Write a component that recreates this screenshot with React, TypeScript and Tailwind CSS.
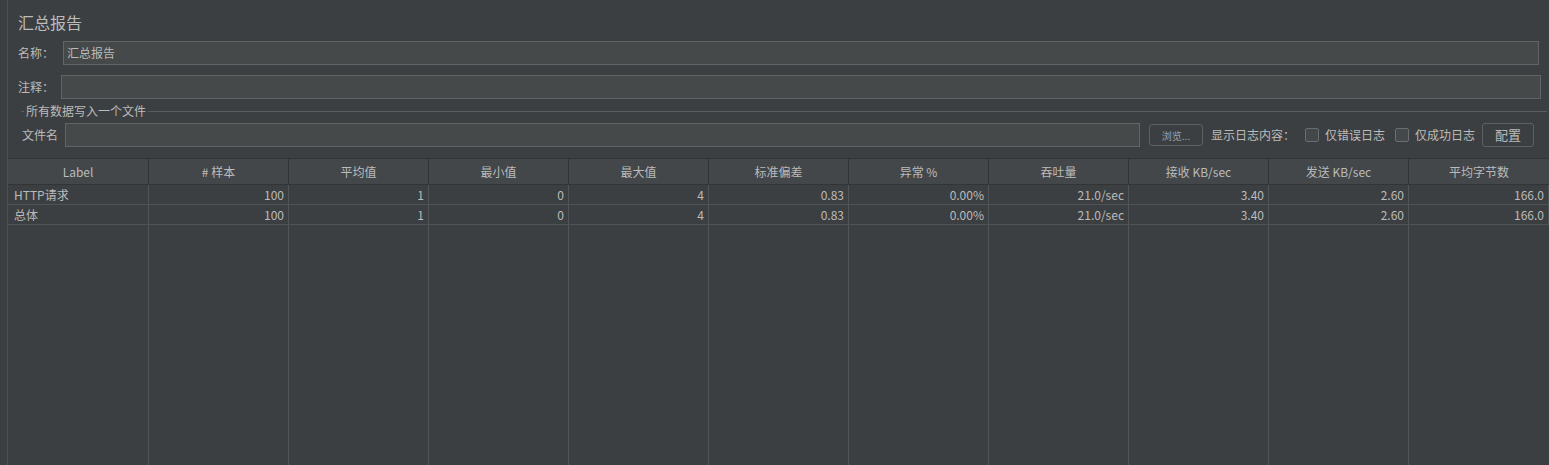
const cols = [
  "Label",
  "# 样本",
  "平均值",
  "最小值",
  "最大值",
  "标准偏差",
  "异常 %",
  "吞吐量",
  "接收 KB/sec",
  "发送 KB/sec",
  "平均字节数",
];

const rows = [
  ["HTTP请求", "100", "1", "0", "4", "0.83", "0.00%", "21.0/sec", "3.40", "2.60", "166.0"],
  ["总体", "100", "1", "0", "4", "0.83", "0.00%", "21.0/sec", "3.40", "2.60", "166.0"],
];

function Checkbox({ label }: { label: string }) {
  return (
    <div className="flex items-center gap-[6px]">
      <span className="h-[14px] w-[14px] rounded-[2px] border border-[#6b6e70] bg-[#43494a]" />
      <span>{label}</span>
    </div>
  );
}

export default function App() {
  return (
    <div
      className="flex h-[465px] w-[1549px] overflow-hidden bg-[#3c3f41] text-[12px] text-[#bbbbbb]"
      style={{ fontFamily: '"Noto Sans CJK SC", "Liberation Sans", sans-serif' }}
    >
      <div className="w-[8px] shrink-0 border-r border-[#4d5052]" />
      <div className="flex min-w-0 flex-1 flex-col">
        <div className="pl-[10px] pt-[12px] text-[16px] leading-[20px]">汇总报告</div>

        <div className="mt-[9px] flex h-[24px] items-center pl-[10px] pr-[10px]">
          <span className="w-[45px]">名称：</span>
          <div className="flex h-full flex-1 items-center border border-[#646464] bg-[#45494a] pl-[3px] leading-none">
            汇总报告
          </div>
        </div>

        <div className="mt-[10px] flex h-[24px] items-center pl-[10px] pr-[8px]">
          <span className="w-[43px]">注释：</span>
          <div className="h-full flex-1 border border-[#646464] bg-[#45494a]" />
        </div>

        <div className="mt-[5px] flex h-[14px] items-center pl-[13px] pr-[2px]">
          <span className="h-px w-[3px] bg-[#5a5d5f]" />
          <span className="px-[2px] leading-none">所有数据写入一个文件</span>
          <span className="h-px flex-1 bg-[#5a5d5f]" />
        </div>

        <div className="mt-[5px] flex h-[24px] items-center pl-[14px] pr-[15px]">
          <span className="w-[43px]">文件名</span>
          <div className="h-full w-[1075px] border border-[#646464] bg-[#45494a]" />
          <button className="ml-[9px] flex h-[22px] w-[54px] items-center justify-center rounded-[3px] border border-[#5e6163] bg-[#3c3f41] text-[10px] text-[#9aa3a8]">
            浏览...
          </button>
          <span className="ml-[8px]">显示日志内容：</span>
          <div className="ml-[10px]">
            <Checkbox label="仅错误日志" />
          </div>
          <div className="ml-[10px]">
            <Checkbox label="仅成功日志" />
          </div>
          <button className="ml-auto flex h-[24px] w-[52px] items-center justify-center rounded-[3px] border border-[#5e6163] bg-[#3c3f41] text-[13px] text-[#bbbbbb]">
            配置
          </button>
        </div>

        <div className="mt-[11px] grid min-h-0 flex-1 grid-cols-[141px_repeat(10,140px)] grid-rows-[26px_20px_20px_1fr] border-t border-[#323436]">
          {cols.map((c, i) => (
            <div
              key={c}
              className={`flex items-center justify-center border-b border-[#323436] bg-[#43474a] ${
                i < cols.length - 1 ? "border-r" : ""
              }`}
            >
              {c}
            </div>
          ))}
          {rows.map((r, ri) =>
            r.map((v, i) => (
              <div
                key={`${ri}-${i}`}
                className={`flex items-center border-b border-r border-[#505456] ${
                  i === 0 ? "justify-start pl-[6px]" : "justify-end pr-[4px]"
                }`}
              >
                {v}
              </div>
            ))
          )}
          {cols.map((c, i) => (
            <div key={`f-${c}`} className={i < cols.length - 1 ? "border-r border-[#505456]" : ""} />
          ))}
        </div>
      </div>
    </div>
  );
}
